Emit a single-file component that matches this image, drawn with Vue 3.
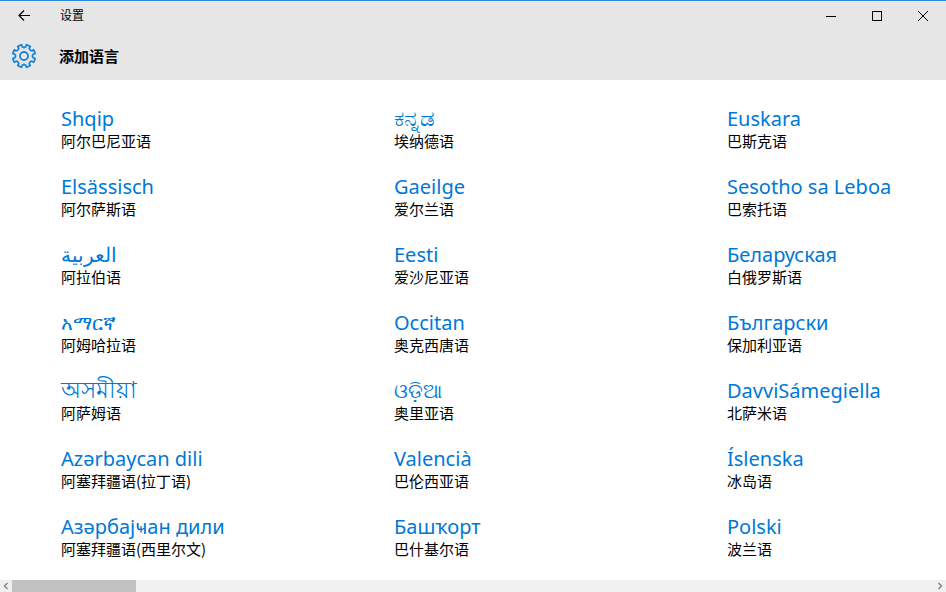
<script setup>
const languages = [
  ['Shqip', '阿尔巴尼亚语'],
  ['Elsässisch', '阿尔萨斯语'],
  ['العربية', '阿拉伯语'],
  ['አማርኛ', '阿姆哈拉语'],
  ['অসমীয়া', '阿萨姆语', 'indic'],
  ['Azərbaycan dili', '阿塞拜疆语(拉丁语)'],
  ['Азәрбајҹан дили', '阿塞拜疆语(西里尔文)'],
  ['ಕನ್ನಡ', '埃纳德语', 'indic'],
  ['Gaeilge', '爱尔兰语'],
  ['Eesti', '爱沙尼亚语'],
  ['Occitan', '奥克西唐语'],
  ['ଓଡ଼ିଆ', '奥里亚语'],
  ['Valencià', '巴伦西亚语'],
  ['Башҡорт', '巴什基尔语'],
  ['Euskara', '巴斯克语'],
  ['Sesotho sa Leboa', '巴索托语'],
  ['Беларуская', '白俄罗斯语'],
  ['Български', '保加利亚语'],
  ['DavviSámegiella', '北萨米语'],
  ['Íslenska', '冰岛语'],
  ['Polski', '波兰语'],
]

// Outline of an eight-toothed gear centred on the origin.
const point = (r, deg) => {
  const a = (deg * Math.PI) / 180
  return `${(r * Math.cos(a)).toFixed(2)} ${(r * Math.sin(a)).toFixed(2)}`
}
const gear =
  Array.from({ length: 8 }, (_, i) => {
    const c = i * 45 + 22.5
    return [
      `${i ? 'L' : 'M'}${point(9, c - 13)}`,
      `L${point(11.5, c - 10)}`,
      `L${point(11.5, c + 10)}`,
      `L${point(9, c + 13)}`,
      `Q${point(7.9, c + 22.5)} ${point(9, c + 32)}`,
    ].join('')
  }).join('') + 'Z'
</script>

<template>
  <div class="window">
    <header class="header">
      <div class="titlebar">
        <button class="back" aria-label="返回">
          <svg width="14" height="12" viewBox="0 0 14 12"><path d="M13 5.5H2M7 .5L2 5.5l5 5" /></svg>
        </button>
        <span class="app-name">设置</span>
        <div class="controls">
          <button aria-label="最小化">
            <svg width="12" height="12" viewBox="0 0 12 12" shape-rendering="crispEdges"><path d="M1 6.5H11" /></svg>
          </button>
          <button aria-label="最大化">
            <svg width="12" height="12" viewBox="0 0 12 12" shape-rendering="crispEdges"><path d="M1.5 1.5h9v9h-9z" /></svg>
          </button>
          <button aria-label="关闭">
            <svg width="12" height="12" viewBox="0 0 12 12"><path d="M1 1l10 10M11 1L1 11" /></svg>
          </button>
        </div>
      </div>
      <div class="heading">
        <svg class="gear" width="26" height="26" viewBox="-13 -13 26 26">
          <path :d="gear" />
          <circle r="4" />
        </svg>
        <h1>添加语言</h1>
      </div>
    </header>

    <main class="viewport">
      <ul class="languages">
        <li v-for="[native, name, script] in languages" :key="name">
          <button class="language">
            <bdi class="native" :class="script">{{ native }}</bdi>
            <span class="name">{{ name }}</span>
          </button>
        </li>
      </ul>
    </main>

    <div class="scrollbar">
      <button aria-label="向左滚动">
        <svg width="12" height="12" viewBox="0 0 12 12"><path d="M7.5 3L4.5 6l3 3" /></svg>
      </button>
      <div class="track"><div class="thumb"></div></div>
      <button aria-label="向右滚动">
        <svg width="12" height="12" viewBox="0 0 12 12"><path d="M4.5 3l3 3-3 3" /></svg>
      </button>
    </div>
  </div>
</template>

<style>
body {
  background: #fff;
}
</style>

<style scoped>
.window {
  display: flex;
  flex-direction: column;
  min-height: 100vh;
  box-sizing: border-box;
  border-top: 1px solid #2b88d8;
  color: #000;
  font-family: "Noto Sans", "Noto Sans CJK SC", sans-serif;
}
button {
  display: flex;
  align-items: center;
  justify-content: center;
  margin: 0;
  padding: 0;
  border: 0;
  background: none;
  color: inherit;
  font: inherit;
}
svg {
  display: block;
  fill: none;
  stroke: #000;
}
.header {
  background: #e6e6e6;
}
.titlebar {
  display: flex;
  align-items: center;
  height: 30px;
}
.back {
  width: 48px;
  height: 30px;
}
.back svg {
  stroke-width: 1.2;
}
.app-name {
  flex: 1;
  padding-left: 12px;
  font-size: 12px;
  line-height: 16px;
}
.controls {
  display: flex;
}
.controls button {
  width: 46px;
  height: 30px;
}
.heading {
  display: flex;
  align-items: center;
  height: 49px;
  gap: 22px;
  padding-left: 11px;
}
.gear {
  stroke: #1883d7;
  stroke-width: 1.8;
  stroke-linejoin: round;
}
h1 {
  margin: 0;
  font-size: 15px;
  line-height: 20px;
  font-weight: 700;
}
.viewport {
  flex: 1;
  overflow: hidden;
}
.languages {
  display: grid;
  grid-template-rows: repeat(7, 44px);
  grid-auto-flow: column;
  grid-auto-columns: 333px;
  row-gap: 24px;
  margin: 0;
  padding: 26px 0 20px 61px;
  list-style: none;
}
.language {
  flex-direction: column;
  align-items: flex-start;
  text-align: left;
}
.native {
  height: 26px;
  color: #0078d7;
  font-family: "Noto Sans", "Open Sans", sans-serif;
  font-size: 20px;
  line-height: 26px;
  white-space: nowrap;
}
.native.indic {
  font-size: 23px;
  line-height: 22px;
}
.name {
  height: 18px;
  font-family: "Noto Sans CJK SC", sans-serif;
  font-size: 15px;
  line-height: 18px;
  white-space: nowrap;
}
.scrollbar {
  display: flex;
  height: 12px;
  background: #f0f0f0;
}
.scrollbar svg {
  stroke: #888;
  stroke-width: 1.5;
}
.track {
  flex: 1;
}
.thumb {
  width: 124px;
  height: 12px;
  background: #c2c2c2;
}
</style>
